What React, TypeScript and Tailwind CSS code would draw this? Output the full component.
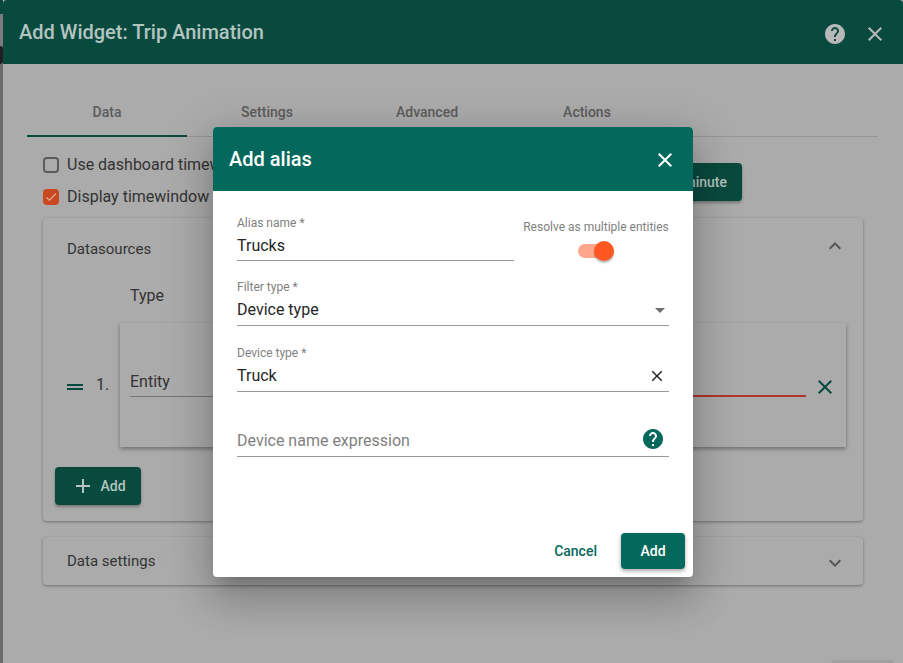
const closePath =
  "M19 6.41L17.59 5 12 10.59 6.41 5 5 6.41 10.59 12 5 17.59 6.41 19 12 13.41 17.59 19 19 17.59 13.41 12 19 6.41z";
const helpPath =
  "M12 2C6.48 2 2 6.48 2 12s4.48 10 10 10 10-4.48 10-10S17.52 2 12 2zm1 17h-2v-2h2v2zm2.07-7.75l-.9.92C13.45 12.9 13 13.5 13 15h-2v-.5c0-1.1.45-2.1 1.17-2.83l1.24-1.26c.37-.36.59-.86.59-1.41 0-1.1-.9-2-2-2s-2 .9-2 2H8c0-2.21 1.79-4 4-4s4 1.79 4 4c0 .88-.36 1.68-.93 2.25z";

function Icon({ d, className }: { d: string; className: string }) {
  return (
    <svg viewBox="0 0 24 24" fill="currentColor" className={className}>
      <path d={d} />
    </svg>
  );
}

const tabs = ["Data", "Settings", "Advanced", "Actions"];

function Field({
  label,
  value,
  right,
  className,
  tight,
}: {
  label: string;
  value: string;
  right?: React.ReactNode;
  className: string;
  tight?: boolean;
}) {
  return (
    <div className={className}>
      <div className="text-xs leading-4 text-[#7f7f7f]">{label}</div>
      <div
        className={
          tight
            ? "mt-[3px] flex items-start justify-between border-b border-[#9a9a9a] pb-[2px] text-base leading-6 text-[#262626]"
            : "mt-[3px] flex items-start justify-between border-b border-[#9a9a9a] pb-[3px] text-base leading-6 text-[#262626]"
        }
      >
        <span>{value}</span>
        {right}
      </div>
    </div>
  );
}

function AddAliasDialog() {
  return (
    <div className="absolute left-[213px] top-[127px] flex h-[450px] w-[480px] flex-col overflow-hidden rounded bg-white shadow-[0_11px_15px_-7px_rgba(0,0,0,0.2),0_24px_38px_3px_rgba(0,0,0,0.14),0_9px_46px_8px_rgba(0,0,0,0.12)]">
      <div className="flex h-16 shrink-0 items-center justify-between bg-[#04695c] pl-4 pr-4 text-white">
        <h2 className="text-xl font-medium">Add alias</h2>
        <Icon d={closePath} className="mt-0.5 h-6 w-6" />
      </div>
      <div className="flex flex-1 flex-col px-6 pt-[24px]">
        <div className="flex justify-between">
          <Field label="Alias name *" value="Trucks" className="w-[277px]" tight />
          <div className="flex w-[146px] flex-col items-center pt-[4px]">
            <div className="whitespace-nowrap text-xs leading-4 text-[#7f7f7f]">
              Resolve as multiple entities
            </div>
            <div className="relative mt-[9px] ml-[-2px] h-[14px] w-[34px] rounded-full bg-[#ffa78c]">
              <div className="absolute left-[16px] top-[-3px] h-5 w-5 rounded-full bg-[#ff5722] shadow-[0_2px_2px_rgba(0,0,0,0.28)]" />
            </div>
          </div>
        </div>
        <Field
          label="Filter type *"
          value="Device type"
          className="mt-[18px]"
          right={<Icon d="M7 10l5 5 5-5z" className="mr-[-3px] h-6 w-6 text-[#6f6f6f]" />}
        />
        <Field
          label="Device type *"
          value="Truck"
          className="mt-[19px]"
          right={<Icon d={closePath} className="mr-[3px] mt-[3px] h-[18px] w-[18px] text-[#262626]" />}
        />
        <div className="mt-[36px] flex h-[29px] items-start justify-between border-b border-[#9a9a9a] text-base leading-[26px] text-[#7f7f7f]">
          <span>Device name expression</span>
          <Icon d={helpPath} className="mr-1 mt-[-1px] h-6 w-6 text-[#04695c]" />
        </div>
        <div className="mb-2 mr-[-16px] mt-auto flex items-center justify-end gap-6">
          <span className="text-sm font-medium text-[#04695c]">Cancel</span>
          <button className="h-9 w-16 rounded bg-[#04695c] text-sm font-medium text-white shadow-[0_2px_4px_rgba(0,0,0,0.35)]">
            Add
          </button>
        </div>
      </div>
    </div>
  );
}

export default function App() {
  return (
    <div
      className="relative flex h-[663px] w-[903px] overflow-hidden bg-[#ababab]"
      style={{ fontFamily: "Roboto, sans-serif" }}
    >
      <div className="flex w-[3px] shrink-0 flex-col bg-[#6b6b6b]">
        <div className="h-[14px] bg-[#094a3f]" />
        <div className="h-[32px] bg-[#7c7c7c]" />
        <div className="h-[18px] rounded-r-full bg-[#1f1f1f]" />
      </div>
      <div className="flex w-[900px] flex-col">
        <header className="flex h-16 shrink-0 items-center justify-between rounded-t bg-[#094a3f] pl-4 pr-4 text-[#b4c4c0]">
          <h1 className="text-xl font-medium">Add Widget: Trip Animation</h1>
          <div className="mt-1 flex items-center gap-4 text-[#b8b8b8]">
            <Icon d={helpPath} className="h-6 w-6" />
            <Icon d={closePath} className="h-6 w-6" />
          </div>
        </header>

        <div className="ml-6 mt-6 flex h-[49px] w-[851px] shrink-0 border-b border-[#969696]">
          {tabs.map((tab, i) => (
            <div
              key={tab}
              className={
                i === 0
                  ? "flex h-[49px] w-40 items-center justify-center border-b-2 border-[#094a3f] text-sm font-medium text-[#5c5c5c]"
                  : "flex h-[48px] w-40 items-center justify-center text-sm font-medium text-[#5c5c5c]"
              }
            >
              {tab}
            </div>
          ))}
        </div>

        <div className="ml-10 flex w-[820px] flex-col">
          <div className="mt-3 flex items-center justify-between">
            <div className="flex w-[170px] flex-col overflow-hidden whitespace-nowrap">
              <label className="flex h-8 items-center gap-2 text-base text-[#333333]">
                <span className="h-4 w-4 shrink-0 rounded-sm border-2 border-[#5c5c5c]" />
                Use dashboard timewindow
              </label>
              <label className="flex h-8 items-center gap-2 text-base text-[#333333]">
                <span className="flex h-4 w-4 shrink-0 items-center justify-center rounded-sm bg-[#c9481f] text-[#e8b9a8]">
                  <Icon d="M9 16.17L4.83 12l-1.42 1.41L9 19 21 7l-1.41-1.41z" className="h-3.5 w-3.5" />
                </span>
                Display timewindow
              </label>
            </div>
            <button className="mr-[121px] mt-[2px] h-[38px] w-[160px] rounded bg-[#094a3f] pr-[15px] text-right text-sm font-medium text-[#b4c4c0] shadow-[0_2px_3px_rgba(0,0,0,0.3)]">
              1 minute
            </button>
          </div>

          <section className="mt-[5px] flex h-[303px] flex-col rounded bg-[#ababab] shadow-[0_1px_3px_rgba(0,0,0,0.35)]">
            <div className="flex h-[62px] shrink-0 items-center justify-between pl-6 pr-4 text-[#333333]">
              <span className="text-[15px]">Datasources</span>
              <Icon d="M12 8l-6 6 1.41 1.41L12 10.83l4.59 4.58L18 14z" className="mt-[-6px] h-6 w-6 text-[#555555]" />
            </div>
            <div className="h-[43px] shrink-0 pl-[87px] text-base leading-[32px] text-[#333333]">Type</div>
            <div className="flex h-[124px] shrink-0 items-center pl-6 pr-[17px]">
              <Icon d="M20 9H4v2h16V9zM4 15h16v-2H4v2z" className="ml-[-4px] mt-[3px] h-6 w-6 text-[#094a3f]" />
              <span className="ml-[9px] w-[24px] text-base text-[#333333]">1.</span>
              <div className="flex h-full w-[726px] shrink-0 items-start pl-[10px] shadow-[0_2px_4px_rgba(0,0,0,0.35)]">
                <div className="mt-[47px] flex w-[676px]">
                  <div className="h-[27px] w-[150px] border-b border-[#777777] text-base leading-[24px] text-[#333333]">
                    Entity
                  </div>
                  <div className="h-[27px] flex-1 border-b-2 border-[#b2352c]" />
                </div>
                <Icon d={closePath} className="ml-[7px] mt-[52px] h-6 w-6 text-[#094a3f]" />
              </div>
            </div>
            <button className="ml-3 mt-5 flex h-[38px] w-[86px] items-center justify-center gap-[5px] rounded bg-[#094a3f] pl-[1px] text-sm font-medium text-[#b4c4c0] shadow-[0_2px_3px_rgba(0,0,0,0.3)]">
              <Icon d="M19 13h-6v6h-2v-6H5v-2h6V5h2v6h6v2z" className="h-6 w-6" />
              Add
            </button>
          </section>

          <section className="mt-4 flex h-12 items-center justify-between rounded bg-[#ababab] pl-6 pr-4 shadow-[0_1px_3px_rgba(0,0,0,0.35)]">
            <span className="text-[15px] text-[#333333]">Data settings</span>
            <Icon d="M16.59 8.59L12 13.17 7.41 8.59 6 10l6 6 6-6z" className="mt-1 h-6 w-6 text-[#555555]" />
          </section>
        </div>
      </div>

      <div className="absolute bottom-[-4px] left-[831px] h-[7px] w-[63px] rounded-t bg-[#a0a0a0]" />
      <AddAliasDialog />
    </div>
  );
}
